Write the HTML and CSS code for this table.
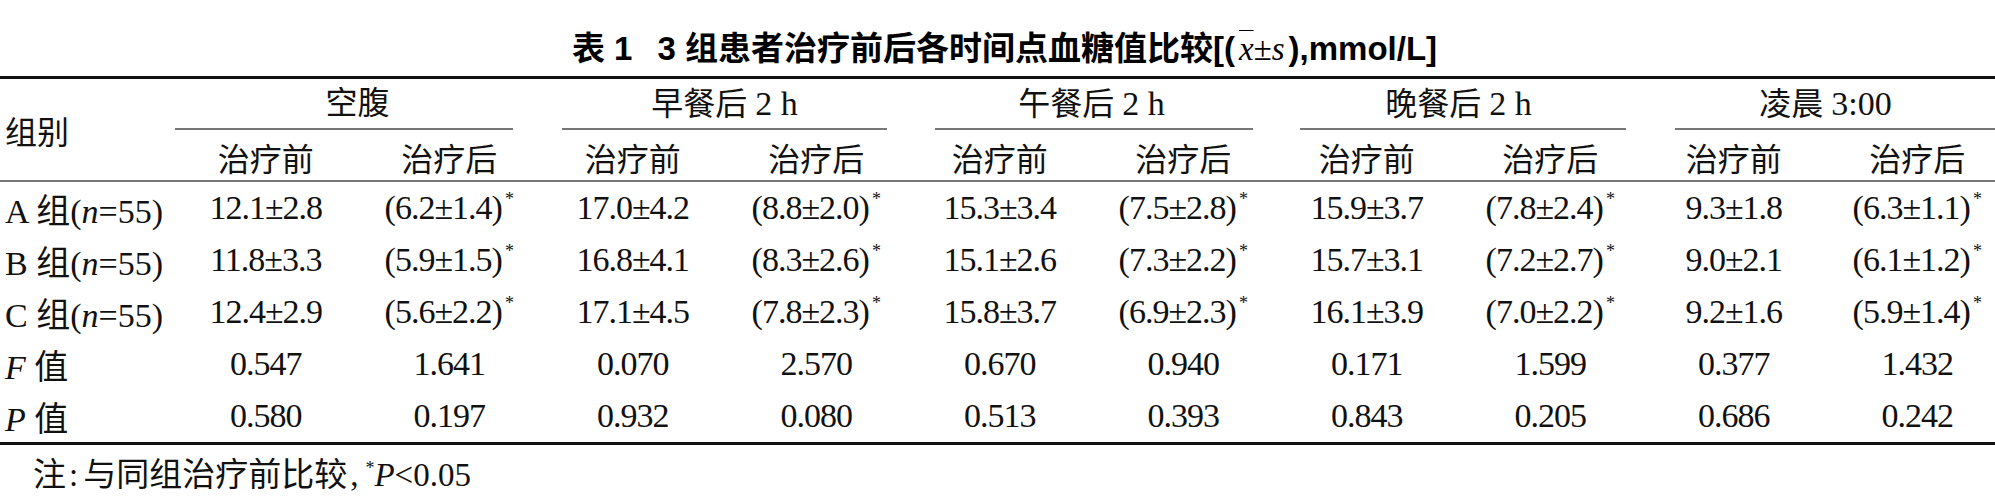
FILE: index.html
```html
<!DOCTYPE html>
<html lang="zh-CN">
<head>
    <meta charset="UTF-8">
    <meta name="viewport" content="width=device-width, initial-scale=1.0">
    <title>3组患者治疗前后各时间点血糖值比较</title>
    <link rel="stylesheet" href="styles.css">
</head>
<body>
    <div class="page">
        <h1 class="caption">
            <span class="cap-no">表 1</span>3 组患者治疗前后各时间点血糖值比较[(<span class="stat"><span class="xbar">x</span>±s</span>),mmol/L]
        </h1>

        <table class="data">
            <colgroup>
                <col class="col-label">
                <col><col><col><col><col><col><col><col><col><col>
            </colgroup>
            <thead>
                <tr class="head-top">
                    <th rowspan="2" class="label-col">组别</th>
                    <th colspan="2" class="grp g1"><div class="grp-name">空腹</div><div class="grp-rule"></div></th>
                    <th colspan="2" class="grp g2"><div class="grp-name">早餐后 <span class="num">2 h</span></div><div class="grp-rule"></div></th>
                    <th colspan="2" class="grp g3"><div class="grp-name">午餐后 <span class="num">2 h</span></div><div class="grp-rule"></div></th>
                    <th colspan="2" class="grp g4"><div class="grp-name">晚餐后 <span class="num">2 h</span></div><div class="grp-rule"></div></th>
                    <th colspan="2" class="grp g5"><div class="grp-name">凌晨 <span class="num">3:00</span></div><div class="grp-rule"></div></th>
                </tr>
                <tr class="head-sub">
                    <th>治疗前</th><th>治疗后</th>
                    <th>治疗前</th><th>治疗后</th>
                    <th>治疗前</th><th>治疗后</th>
                    <th>治疗前</th><th>治疗后</th>
                    <th>治疗前</th><th>治疗后</th>
                </tr>
            </thead>
            <tbody>
                <tr>
                    <td class="row-label">A 组(<i>n</i>=55)</td>
                    <td>12.1±2.8</td><td>(6.2±1.4)<sup>*</sup></td>
                    <td>17.0±4.2</td><td>(8.8±2.0)<sup>*</sup></td>
                    <td>15.3±3.4</td><td>(7.5±2.8)<sup>*</sup></td>
                    <td>15.9±3.7</td><td>(7.8±2.4)<sup>*</sup></td>
                    <td>9.3±1.8</td><td>(6.3±1.1)<sup>*</sup></td>
                </tr>
                <tr>
                    <td class="row-label">B 组(<i>n</i>=55)</td>
                    <td>11.8±3.3</td><td>(5.9±1.5)<sup>*</sup></td>
                    <td>16.8±4.1</td><td>(8.3±2.6)<sup>*</sup></td>
                    <td>15.1±2.6</td><td>(7.3±2.2)<sup>*</sup></td>
                    <td>15.7±3.1</td><td>(7.2±2.7)<sup>*</sup></td>
                    <td>9.0±2.1</td><td>(6.1±1.2)<sup>*</sup></td>
                </tr>
                <tr>
                    <td class="row-label">C 组(<i>n</i>=55)</td>
                    <td>12.4±2.9</td><td>(5.6±2.2)<sup>*</sup></td>
                    <td>17.1±4.5</td><td>(7.8±2.3)<sup>*</sup></td>
                    <td>15.8±3.7</td><td>(6.9±2.3)<sup>*</sup></td>
                    <td>16.1±3.9</td><td>(7.0±2.2)<sup>*</sup></td>
                    <td>9.2±1.6</td><td>(5.9±1.4)<sup>*</sup></td>
                </tr>
                <tr>
                    <td class="row-label"><i>F</i> 值</td>
                    <td>0.547</td><td>1.641</td>
                    <td>0.070</td><td>2.570</td>
                    <td>0.670</td><td>0.940</td>
                    <td>0.171</td><td>1.599</td>
                    <td>0.377</td><td>1.432</td>
                </tr>
                <tr>
                    <td class="row-label"><i>P</i> 值</td>
                    <td>0.580</td><td>0.197</td>
                    <td>0.932</td><td>0.080</td>
                    <td>0.513</td><td>0.393</td>
                    <td>0.843</td><td>0.205</td>
                    <td>0.686</td><td>0.242</td>
                </tr>
            </tbody>
        </table>

        <p class="note">注<span class="punct">:</span>与同组治疗前比较<span class="punct">,</span><sup>*</sup><i>P</i>&lt;0.05</p>
    </div>
</body>
</html>
```

FILE: styles.css
```css
* {
    margin: 0;
    padding: 0;
    box-sizing: border-box;
}

html, body {
    overflow: hidden;
}

body {
    background-color: #fff;
    color: #111;
    font-family: "Liberation Serif", "Noto Sans CJK SC", serif;
}

/* the scan is a little wider than the window, right edge is cut */
.page {
    width: 2009px;
}

.caption {
    height: 76px;
    padding-top: 29px;
    line-height: 40px;
    text-align: center;
    font-family: "Liberation Sans", "Noto Sans CJK SC", sans-serif;
    font-size: 33px;
    font-weight: 700;
    color: #000;
}

.cap-no {
    margin-right: 25px;
}

.stat {
    font-family: "Liberation Serif", serif;
    font-style: italic;
    font-weight: 400;
    padding: 0 4px;
}

.xbar {
    text-decoration: overline;
    text-decoration-thickness: 1px;
}

/* Table */
.data {
    width: 2009px;
    table-layout: fixed;
    border-collapse: separate;
    border-spacing: 0;
    border-top: 3px solid #111;
    border-bottom: 3px solid #111;
}

.col-label {
    width: 174px;
}

th {
    font-weight: 400;
    font-size: 32px;
    text-align: center;
}

.num {
    font-family: "Liberation Serif", serif;
    font-size: 34px;
}

.label-col {
    text-align: left;
    padding-left: 5px;
    border-bottom: 2px solid #777;
}

.grp {
    vertical-align: bottom;
}

.grp-name {
    height: 49px;
    line-height: 49px;
}

.grp-rule {
    border-top: 2px solid #777;
}

.g1 .grp-rule { margin: 0 28px 0 1px; }
.g2 .grp-rule { margin: 0 21px 0 21px; }
.g3 .grp-rule { margin: 0 22px 0 27px; }
.g4 .grp-rule { margin: 0 16px 0 25px; }
.g5 .grp-rule { margin: 0 0 0 33px; }

.head-sub th {
    height: 52px;
    padding-top: 3px;
    border-bottom: 2px solid #777;
}

td {
    height: 52px;
    text-align: center;
    font-size: 34px;
    letter-spacing: -1px;
    white-space: nowrap;
}

td sup {
    font-size: 18px;
    vertical-align: 14px;
    margin-left: 3px;
    letter-spacing: 0;
}

.row-label {
    text-align: left;
    padding-left: 5px;
    letter-spacing: 0;
}

.note {
    margin-top: 4px;
    padding-left: 33px;
    line-height: 38px;
    font-size: 33px;
}

.note .punct {
    margin: 0 5px 0 3px;
}

.note sup {
    font-size: 18px;
    vertical-align: 12px;
    margin-left: 2px;
}
```
